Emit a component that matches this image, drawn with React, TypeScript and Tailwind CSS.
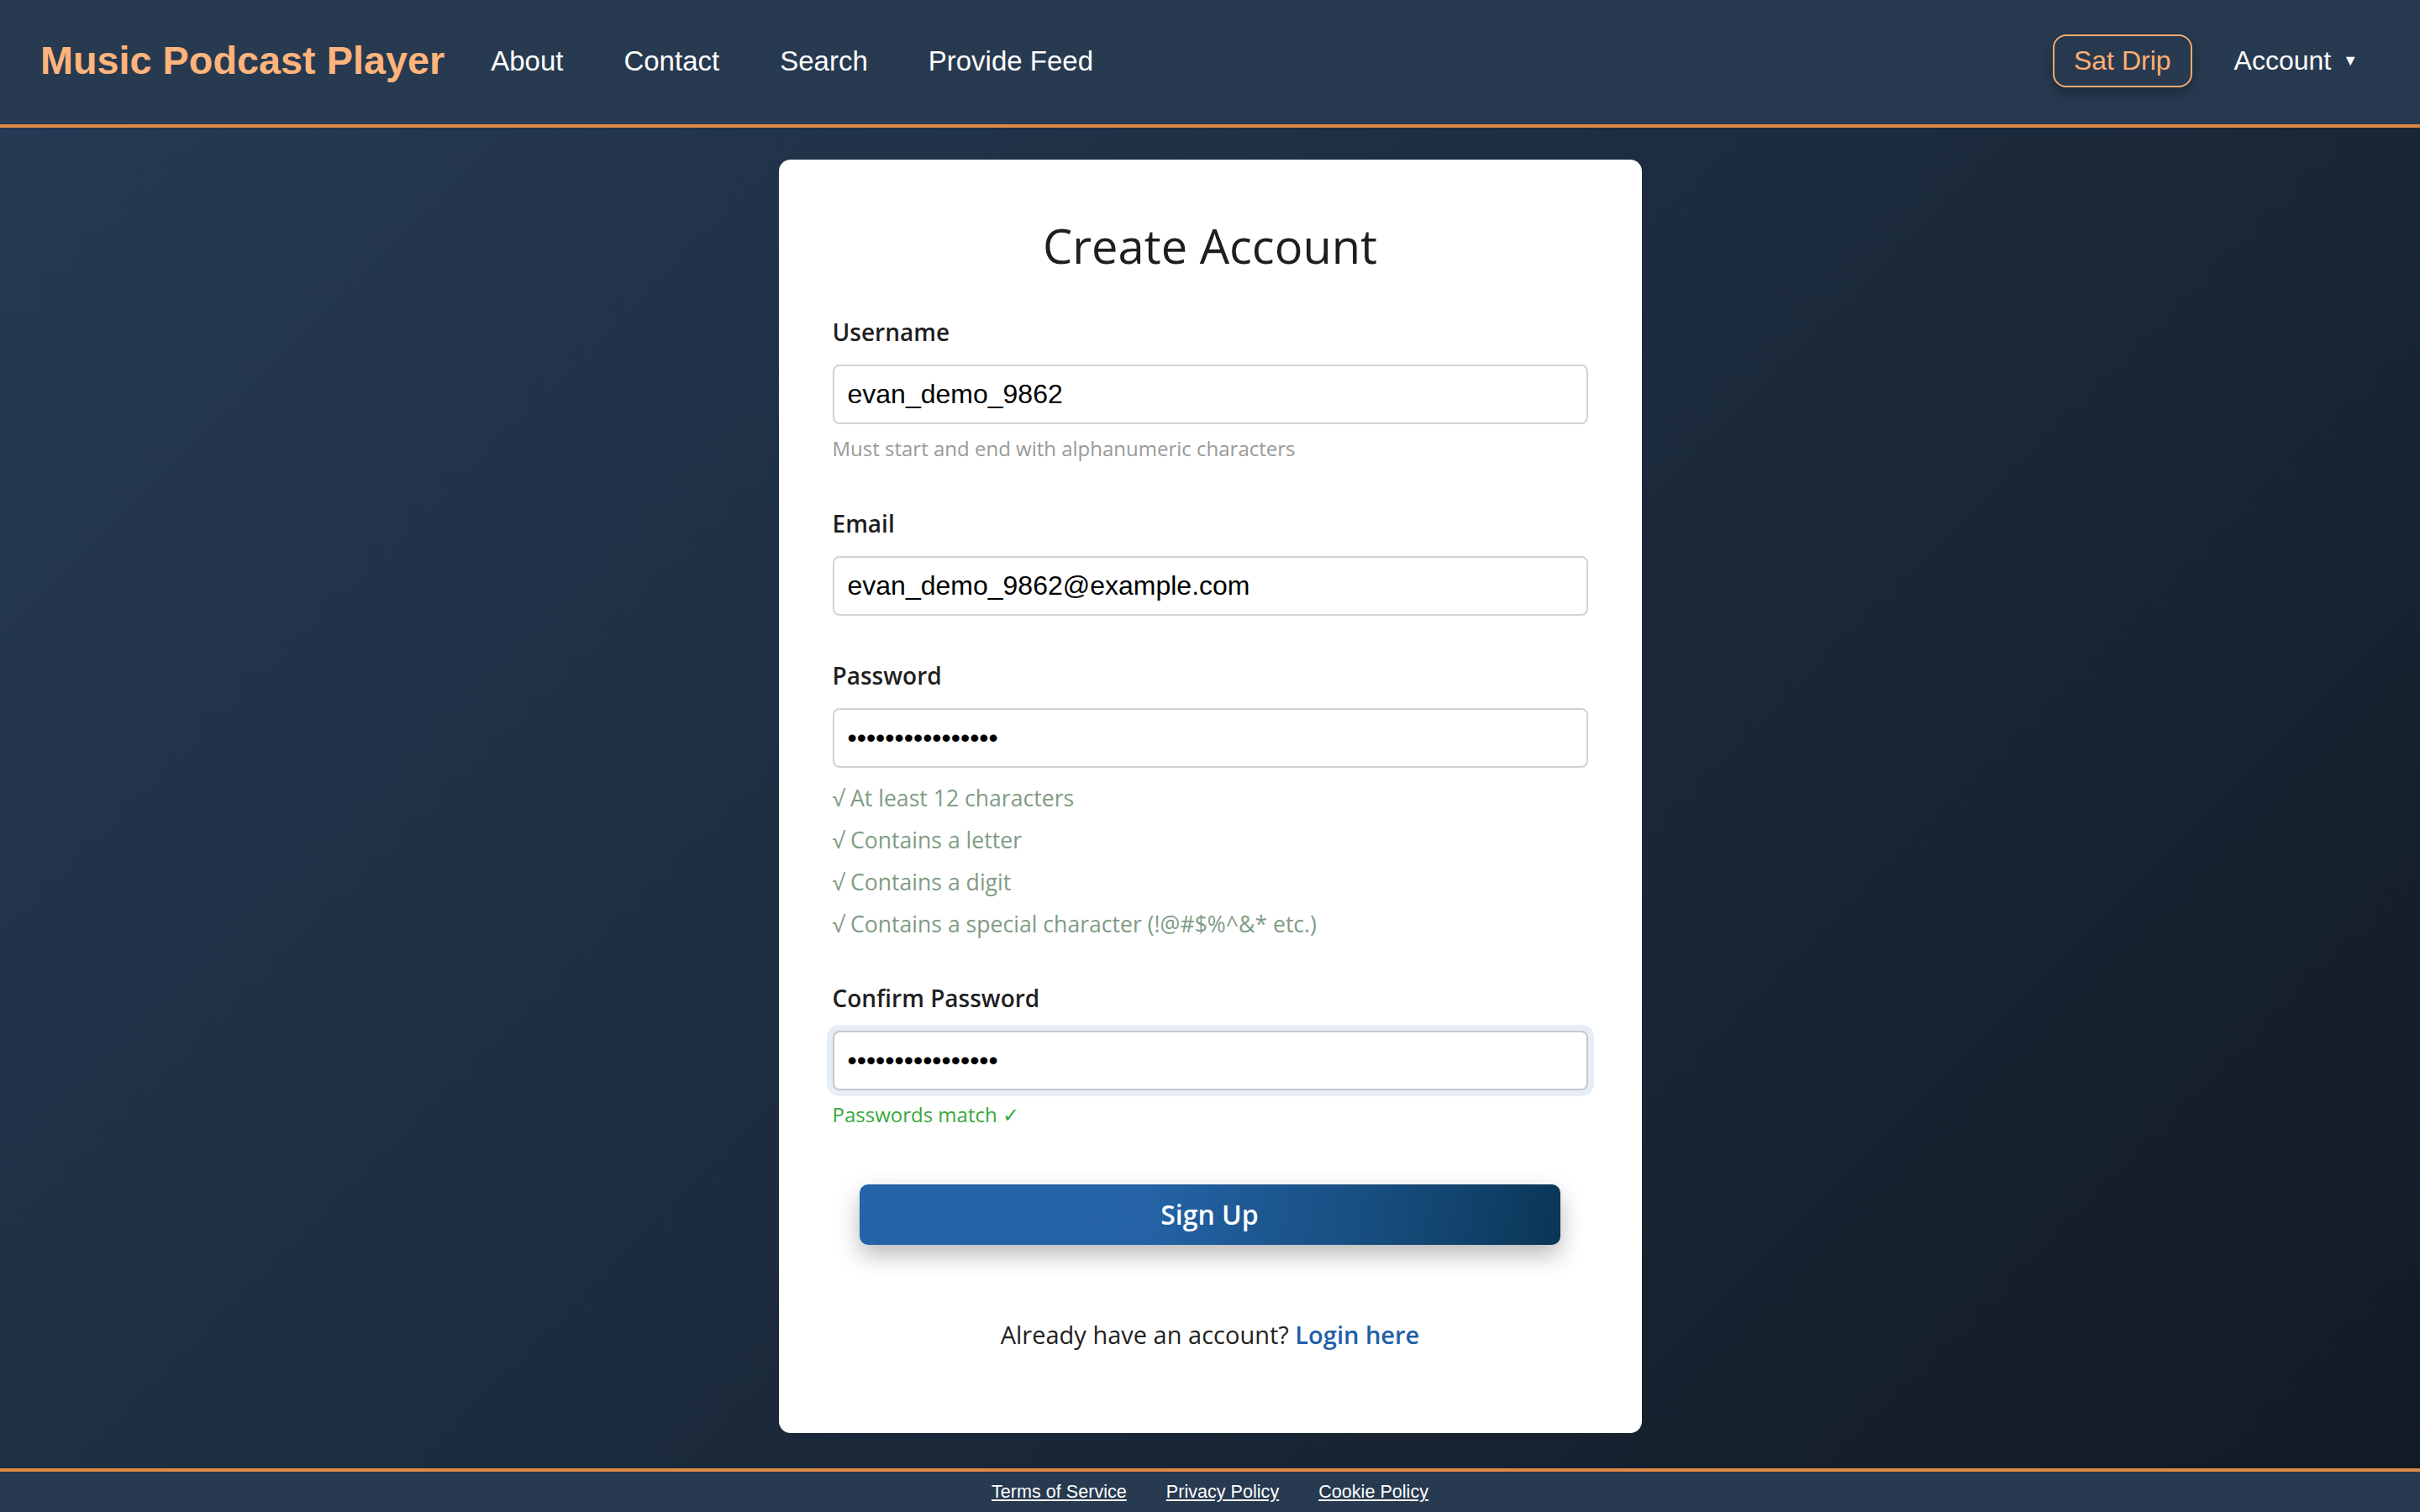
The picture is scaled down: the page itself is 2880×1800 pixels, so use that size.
import { useState } from "react"

const navLinks = ["About", "Contact", "Search", "Provide Feed"]

const rules = [
  "At least 12 characters",
  "Contains a letter",
  "Contains a digit",
  "Contains a special character (!@#$%^&* etc.)",
]

const footerLinks = ["Terms of Service", "Privacy Policy", "Cookie Policy"]

const cardFont = { fontFamily: '"Open Sans", "Noto Sans", sans-serif' }

function Field({
  label,
  type,
  value,
  focused,
  first,
}: {
  label: string
  type: string
  value: string
  focused?: boolean
  first?: boolean
}) {
  return (
    <>
      <label
        className={`block text-[28px] leading-[40px] font-semibold text-[#1f1f1f] ${first ? "mt-[45px]" : ""}`}
      >
        {label}
      </label>
      <input
        type={type}
        defaultValue={value}
        readOnly
        className={`mt-[19px] block w-full h-[71px] rounded-[8px] border-2 px-[16px] text-[32px] text-black outline-none font-['Liberation_Sans',Arial,sans-serif] ${
          focused
            ? "border-[#c4c7cb] shadow-[0_0_0_7px_#e6edf5]"
            : "border-[#d2d2d2]"
        }`}
      />
    </>
  )
}

export default function App() {
  const [username] = useState("evan_demo_9862")

  return (
    <div className="min-h-screen flex flex-col bg-[linear-gradient(135deg,#263b54_0%,#1d2d40_45%,#121a24_100%)] font-['Liberation_Sans',Arial,sans-serif]">
      <nav className="h-[152px] shrink-0 bg-[#273a50] border-b-4 border-[#e08a45] flex items-center pl-[48px] pr-[74px] pb-[4px]">
        <div className="text-[46.8px] font-bold text-[#ffb47c] leading-none">
          Music Podcast Player
        </div>
        <div className="flex items-center gap-[72px] ml-[55px]">
          {navLinks.map((link) => (
            <a key={link} className="text-[33px] text-white leading-none">
              {link}
            </a>
          ))}
        </div>
        <div className="ml-auto flex items-center">
          <button className="h-[63px] px-[23px] rounded-[16px] border-2 border-[#f2a96f] text-[32px] text-[#ffad72] leading-none shadow-[0_6px_16px_rgba(0,0,0,0.3)]">
            Sat Drip
          </button>
          <button className="ml-[50px] flex items-center text-[32px] text-white leading-none">
            Account
            <span className="ml-[14px] text-[18px]">▼</span>
          </button>
        </div>
      </nav>

      <main className="flex-1 flex justify-center items-start pt-[38px] pb-[42px]">
        <div
          className="w-[1027px] bg-white rounded-[14px] px-[64px] pt-[64px] pb-[97px]"
          style={cardFont}
        >
          <h2 className="text-center text-[56px] leading-[76px] text-[#1e1e1e]">
            Create Account
          </h2>

          <Field label="Username" type="text" value={username} first />
          <p className="mt-[12px] text-[24px] leading-[34px] text-[#999]">
            Must start and end with alphanumeric characters
          </p>

          <div className="mt-[52px]">
            <Field label="Email" type="email" value="evan_demo_9862@example.com" />
          </div>

          <div className="mt-[51px]">
            <Field label="Password" type="password" value="••••••••••••••••" />
          </div>
          <ul className="mt-[12px]">
            {rules.map((rule) => (
              <li key={rule} className="h-[50px] flex items-center text-[26.6px] text-[#7f9c84]">
                √&nbsp;{rule}
              </li>
            ))}
          </ul>

          <div className="mt-[42px]">
            <Field
              label="Confirm Password"
              type="password"
              value="••••••••••••••••"
              focused
            />
          </div>
          <p className="mt-[12px] text-[24px] leading-[34px] text-[#38a83a]">
            Passwords match ✓
          </p>

          <button className="mt-[66px] mx-[32px] block w-[834px] h-[72px] rounded-[10px] text-white text-[32px] font-semibold bg-[linear-gradient(100deg,#2563a8_0%,#2462a5_42%,#164c7c_75%,#0a3656_100%)] shadow-[0_12px_28px_rgba(0,0,0,0.28)]">
            Sign Up
          </button>

          <p className="mt-[87px] text-center text-[29px] leading-[40px] text-[#222]">
            Already have an account?{" "}
            <a className="text-[#1f5fa8] font-semibold">Login here</a>
          </p>
        </div>
      </main>

      <footer className="h-[52px] shrink-0 bg-[#273a50] border-t-4 border-[#e08a45] flex items-center justify-center gap-[47px]">
        {footerLinks.map((link) => (
          <a key={link} className="text-[21.6px] text-white underline leading-none">
            {link}
          </a>
        ))}
      </footer>
    </div>
  )
}
